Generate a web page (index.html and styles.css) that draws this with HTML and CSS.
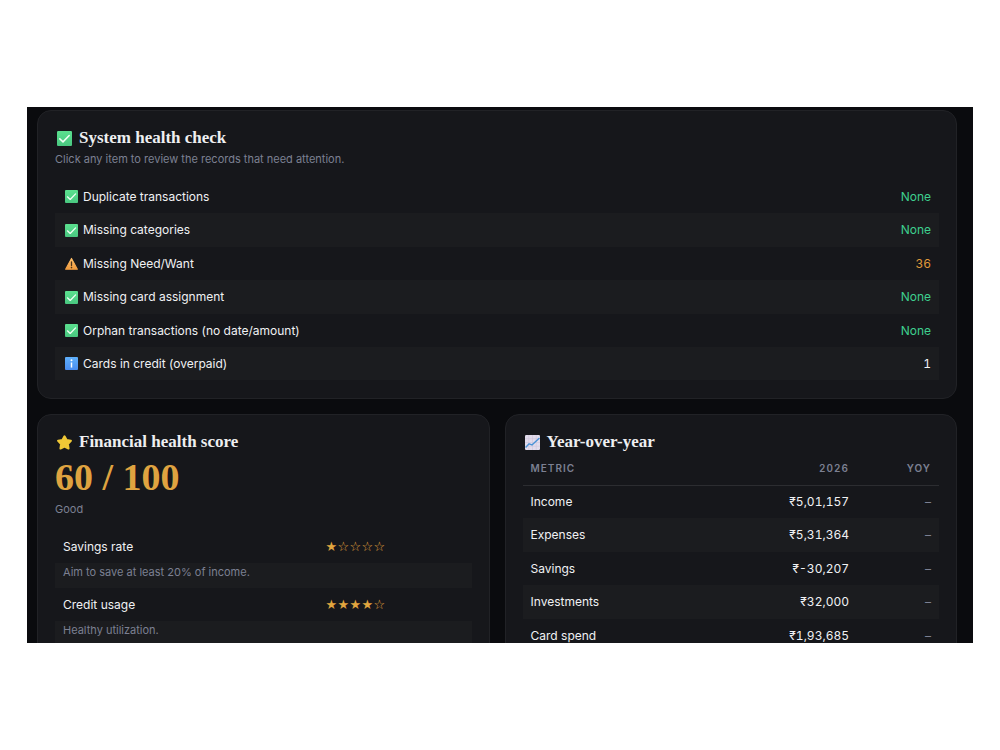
FILE: index.html
```html
<!DOCTYPE html>
<html lang="en">
<head>
<meta charset="utf-8">
<title>Financial dashboard</title>
<link rel="stylesheet" href="styles.css">
</head>
<body>
<svg class="sprite" aria-hidden="true">
  <defs>
    <linearGradient id="green" x1="0" y1="0" x2="0" y2="1"><stop offset="0" stop-color="#5be08f"/><stop offset="1" stop-color="#49c780"/></linearGradient>
    <linearGradient id="amber" x1="0" y1="0" x2="0" y2="1"><stop offset="0" stop-color="#ffc06a"/><stop offset="1" stop-color="#ee9a3e"/></linearGradient>
    <linearGradient id="blue" x1="0" y1="0" x2="0" y2="1"><stop offset="0" stop-color="#5fb0fb"/><stop offset="1" stop-color="#4a8df0"/></linearGradient>
  </defs>
  <symbol id="check" viewBox="0 0 16 16"><rect width="16" height="16" rx="1.2" fill="url(#green)"/><path d="M3 8.4 6.4 11.6 13 4.8" fill="none" stroke="#f2fff6" stroke-width="1.6" stroke-linecap="round" stroke-linejoin="round"/></symbol>
  <symbol id="warn" viewBox="0 0 16 16"><path d="M8 1.8 15.2 15H.8Z" fill="url(#amber)" stroke="url(#amber)" stroke-width="1.4" stroke-linejoin="round"/><path d="M8 6v4.6" stroke="#4a341c" stroke-width="1.6" stroke-linecap="round"/><circle cx="8" cy="13" r="1" fill="#4a341c"/></symbol>
  <symbol id="info" viewBox="0 0 16 16"><rect width="16" height="16" rx="1.2" fill="url(#blue)"/><circle cx="8" cy="4" r="1.2" fill="#fff"/><path d="M8 6.8V13" fill="none" stroke="#fff" stroke-width="1.8"/></symbol>
  <symbol id="star" viewBox="0 0 16 16"><path d="M8 1.4 10.2 5.4 14.8 6.2 11.6 9.6 12.3 14.4 8 12.4 3.7 14.4 4.4 9.6 1.2 6.2 5.8 5.4Z" fill="#f0c836" stroke="#f0c836" stroke-width="2.2" stroke-linejoin="round"/></symbol>
  <symbol id="chart" viewBox="0 0 16 16"><rect width="16" height="16" rx="1.2" fill="#e2dcec"/><path d="M4 0V16M8 0V16M12 0V16M0 4H16M0 8H16M0 12H16" stroke="#cdc3dc" stroke-width=".6"/><path d="M.6 13.4 4.4 9.4 7.4 10.6 15.4 3.2" fill="none" stroke="#4a93d6" stroke-width="1.5" stroke-linejoin="round"/></symbol>
</svg>

<main class="app">
  <section class="card card-wide">
    <h2 class="title"><svg class="icon"><use href="#check"/></svg>System health check</h2>
    <p class="note">Click any item to review the records that need attention.</p>
    <table class="table checks">
      <tbody>
        <tr><td><span class="label"><svg class="icon-small"><use href="#check"/></svg>Duplicate transactions</span></td><td class="num ok">None</td></tr>
        <tr><td><span class="label"><svg class="icon-small"><use href="#check"/></svg>Missing categories</span></td><td class="num ok">None</td></tr>
        <tr><td><span class="label"><svg class="icon-small"><use href="#warn"/></svg>Missing Need/Want</span></td><td class="num alert">36</td></tr>
        <tr><td><span class="label"><svg class="icon-small"><use href="#check"/></svg>Missing card assignment</span></td><td class="num ok">None</td></tr>
        <tr><td><span class="label"><svg class="icon-small"><use href="#check"/></svg>Orphan transactions (no date/amount)</span></td><td class="num ok">None</td></tr>
        <tr><td><span class="label"><svg class="icon-small"><use href="#info"/></svg>Cards in credit (overpaid)</span></td><td class="num">1</td></tr>
      </tbody>
    </table>
  </section>

  <section class="card">
    <h2 class="title"><svg class="icon"><use href="#star"/></svg>Financial health score</h2>
    <p class="score">60 / 100</p>
    <p class="note">Good</p>
    <table class="table factors">
      <colgroup><col class="col-factor"><col></colgroup>
      <tbody>
        <tr><td>Savings rate</td><td><span class="stars"><span>★</span><span>☆</span><span>☆</span><span>☆</span><span>☆</span></span></td></tr>
        <tr class="hint"><td colspan="2">Aim to save at least 20% of income.</td></tr>
        <tr><td>Credit usage</td><td><span class="stars"><span>★</span><span>★</span><span>★</span><span>★</span><span>☆</span></span></td></tr>
        <tr class="hint"><td colspan="2">Healthy utilization.</td></tr>
      </tbody>
    </table>
  </section>

  <section class="card">
    <h2 class="title"><svg class="icon"><use href="#chart"/></svg>Year-over-year</h2>
    <table class="table yearly">
      <colgroup><col><col class="col-year"><col class="col-change"></colgroup>
      <thead>
        <tr><th scope="col">Metric</th><th scope="col" class="num">2026</th><th scope="col" class="num">YoY</th></tr>
      </thead>
      <tbody>
        <tr><td>Income</td><td class="num">₹5,01,157</td><td class="num muted">–</td></tr>
        <tr><td>Expenses</td><td class="num">₹5,31,364</td><td class="num muted">–</td></tr>
        <tr><td>Savings</td><td class="num">₹-30,207</td><td class="num muted">–</td></tr>
        <tr><td>Investments</td><td class="num">₹32,000</td><td class="num muted">–</td></tr>
        <tr><td>Card spend</td><td class="num">₹1,93,685</td><td class="num muted">–</td></tr>
      </tbody>
    </table>
  </section>
</main>
</body>
</html>
```
FILE: styles.css
```css
* { box-sizing: border-box; }

body {
  margin: 0;
  height: 100vh;
  padding: 107px 27px;
  background: #fff;
  color: #f0f1f3;
  font: 12px/18px Inter, "Noto Sans", sans-serif;
}

.sprite { position: absolute; width: 0; height: 0; }

.app {
  height: 100%;
  overflow: hidden;
  padding: 3px 16px 0 10px;
  background: #0a0b0e;
  display: grid;
  grid-template-columns: 1fr 1fr;
  align-content: start;
  gap: 15px;
}

.card {
  padding: 17px 17px 18px;
  border: 1px solid #212226;
  border-radius: 14px;
  background: #16171b;
}

.card-wide { grid-column: 1 / -1; }

.title {
  display: flex;
  align-items: center;
  gap: 7px;
  margin: 0;
  padding-left: 2px;
  font: bold 17px/20px "Liberation Serif", serif;
  color: #eeeff1;
}

.icon { width: 15px; height: 15px; }
.icon-small { width: 13px; height: 13px; }

.note {
  margin: 2px 0 12px;
  font-size: 11px;
  color: #7c8092;
}

.score {
  margin: 4px 0 0;
  font: bold 38px/42px "Liberation Serif", serif;
  color: #dfa340;
}

.table {
  width: 100%;
  border-collapse: collapse;
  font-size: 12px;
}

.table td {
  height: 33px;
  padding: 0 8px;
}

.table tbody tr:nth-child(even) { background: #1b1c1f; }

.label {
  display: flex;
  align-items: center;
  gap: 5px;
  padding-left: 2px;
}

.table .num {
  text-align: right;
  font-variant-numeric: tabular-nums;
}

.table .ok { color: #3ecf8e; }
.table .alert { color: #e09a3a; }
.table .muted { color: #7c8092; }

.checks tr:nth-child(even):not(:last-child) td,
.yearly tr:nth-child(even) td { height: 34px; }

.factors, .yearly { table-layout: fixed; }
.col-factor { width: 63%; }
.col-year { width: 110px; }
.col-change { width: 82px; }

.factors .hint td {
  height: 25px;
  padding-bottom: 7px;
  font-size: 11px;
  color: #7c8092;
}

.stars {
  display: grid;
  grid-template-columns: repeat(5, 12px);
  justify-items: center;
  font-family: "DejaVu Sans", sans-serif;
  font-size: 13px;
  font-weight: bold;
  color: #e2a63f;
}

.table th {
  height: 33px;
  padding: 0 8px;
  border-bottom: 1px solid #2c2d31;
  text-align: left;
  text-transform: uppercase;
  font-size: 10px;
  font-weight: 600;
  letter-spacing: 1px;
  color: #7c8092;
}
```
